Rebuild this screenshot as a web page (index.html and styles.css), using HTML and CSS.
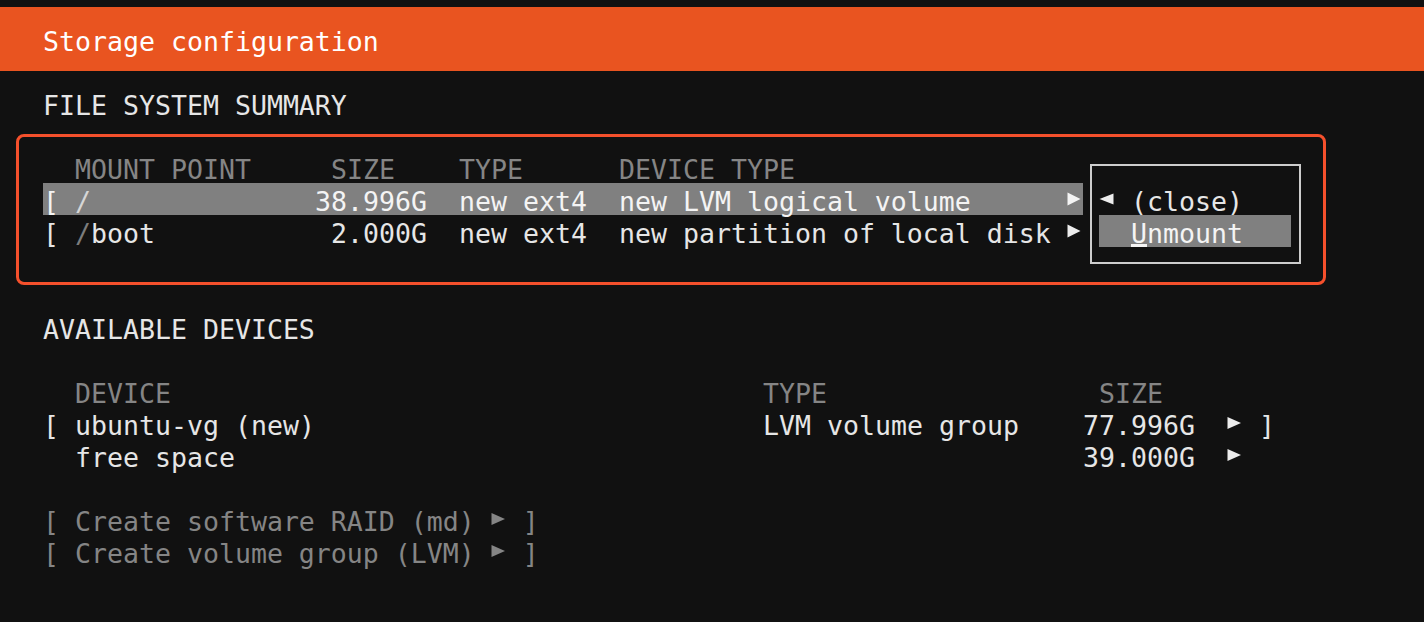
FILE: index.html
```html
<!DOCTYPE html>
<html lang="en">
<head>
<meta charset="utf-8">
<title>Storage configuration</title>
<link rel="stylesheet" href="styles.css">
</head>
<body>
<div class="screen">
  <header class="titlebar">
    <div class="line">Storage configuration</div>
  </header>
  <main class="content">
    <div class="line">FILE SYSTEM SUMMARY</div>
    <div class="line"></div>
    <section class="fs">
      <div class="fs-row head">
        <span></span><span>MOUNT POINT</span><span class="size-h">SIZE</span><span class="type">TYPE</span><span>DEVICE TYPE</span><span></span>
      </div>
      <div class="fs-row sel">
        <span>[ </span><span><span class="slash">/</span></span><span class="num">38.996G</span><span class="type">new ext4</span><span>new LVM logical volume</span>
        <span class="arrow"><svg width="16" height="32" viewBox="0 0 16 32"><polygon points="0.5,9.5 13.5,16 0.5,22.5" fill="#f4f4f4"/></svg></span>
      </div>
      <div class="fs-row">
        <span>[ </span><span><span class="slash">/</span>boot</span><span class="num">2.000G</span><span class="type">new ext4</span><span>new partition of local disk</span>
        <span class="arrow"><svg width="16" height="32" viewBox="0 0 16 32"><polygon points="0.5,9.5 13.5,16 0.5,22.5" fill="#ececec"/></svg></span>
      </div>
      <div class="line"></div>

      <div class="annot"></div>

      <div class="menu">
        <div class="menu-item">
          <svg class="marker" width="16" height="32" viewBox="0 0 16 32"><polygon points="14.5,10.5 0.5,16 14.5,21.5" fill="#ececec"/></svg><span> (close)</span>
        </div>
        <div class="menu-item sel">
          <span>  </span><span class="accel">U</span><span>nmount</span>
        </div>
      </div>
    </section>
    <div class="line"></div>

    <div class="line">AVAILABLE DEVICES</div>
    <div class="line"></div>
    <div class="ad-row head">
      <span></span><span>DEVICE</span><span>TYPE</span><span class="size-h">SIZE</span><span></span><span></span>
    </div>
    <div class="ad-row">
      <span>[ </span><span>ubuntu-vg (new)</span><span>LVM volume group</span><span class="num">77.996G</span>
      <span class="arrow end"><svg width="16" height="32" viewBox="0 0 16 32"><polygon points="0.5,10 14,16 0.5,22" fill="#ececec"/></svg></span>
      <span> ]</span>
    </div>
    <div class="ad-row">
      <span></span><span>free space</span><span></span><span class="num">39.000G</span>
      <span class="arrow end"><svg width="16" height="32" viewBox="0 0 16 32"><polygon points="0.5,10 14,16 0.5,22" fill="#ececec"/></svg></span>
      <span></span>
    </div>
    <div class="line"></div>
    <div class="button">
      <span>[ Create software RAID (md) </span><svg width="16" height="32" viewBox="0 0 16 32"><polygon points="0.5,10 14,16 0.5,22" fill="#858585"/></svg><span> ]</span>
    </div>
    <div class="button">
      <span>[ Create volume group (LVM) </span><svg width="16" height="32" viewBox="0 0 16 32"><polygon points="0.5,10 14,16 0.5,22" fill="#858585"/></svg><span> ]</span>
    </div>
  </main>
</div>
</body>
</html>
```

FILE: styles.css
```css
html, body {
  margin: 0;
  padding: 0;
  background: #111111;
}

.screen {
  font-family: "DejaVu Sans Mono", monospace;
  font-size: 26.576px;
  color: #e6e6e6;
  padding-top: 7px;
  height: 622px;
  box-sizing: border-box;
  overflow: hidden;
}

.titlebar {
  background: #e95420;
  color: #ffffff;
  padding: 16px 0 16px 43px;
}

.content {
  padding: 16px 0 0 43px;
}

.line {
  height: 32px;
  line-height: 37.6px;
  white-space: pre;
}

.fs {
  position: relative;
}

.fs-row,
.ad-row {
  display: grid;
  width: max-content;
  height: 32px;
  line-height: 37.6px;
  white-space: pre;
  align-items: start;
}

.fs-row {
  grid-template-columns: 32px 240px 112px 192px 448px 16px;
}

.ad-row {
  grid-template-columns: 32px 688px 320px 112px 48px 32px;
}

.head {
  color: #858585;
}

.num {
  text-align: right;
}

.type {
  padding-left: 32px;
}

.size-h {
  padding-left: 16px;
}

.sel {
  background: #808080;
  color: #f4f4f4;
}

.slash {
  color: #7c7c7c;
}

.sel .slash {
  color: #d6d6d6;
}

.arrow svg {
  display: block;
}

.arrow.end {
  display: flex;
  justify-content: flex-end;
}

.annot {
  position: absolute;
  left: -27px;
  top: -17px;
  width: 1310px;
  height: 151px;
  border: 3px solid #f5502c;
  border-radius: 8px;
  box-sizing: border-box;
  pointer-events: none;
}

.menu {
  position: absolute;
  left: 1047px;
  top: 13px;
  width: 211px;
  box-sizing: border-box;
  border: 2px solid #cdcdcd;
  background: #111111;
  padding: 17px 8px 15px 7px;
}

.menu-item {
  display: flex;
  height: 32px;
  line-height: 37.6px;
  white-space: pre;
}

.menu-item .marker {
  display: block;
  flex: none;
}

.accel {
  text-decoration: underline;
  text-decoration-thickness: 3px;
  text-underline-offset: 1px;
}

.button {
  display: flex;
  height: 32px;
  line-height: 37.6px;
  white-space: pre;
  color: #858585;
}

.button svg {
  display: block;
  flex: none;
}
```
